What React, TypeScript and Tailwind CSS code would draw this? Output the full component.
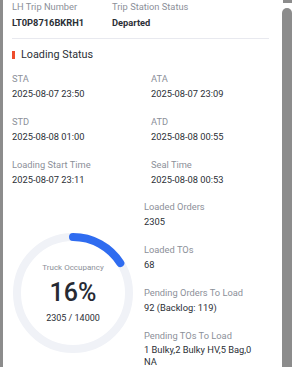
import React from 'react';

const Field: React.FC<{ label: string; value: string }> = ({ label, value }) => (
  <div>
    <div className="text-[9.3px] leading-[14px] text-[#8c9099]">{label}</div>
    <div className="mt-[1px] text-[9.3px] leading-[14px] text-[#2b2f36]">{value}</div>
  </div>
);

const OccupancyRing: React.FC<{ percent: number; loaded: number; total: number }> = ({ percent, loaded, total }) => {
  const r = 56;
  const c = 2 * Math.PI * r;
  return (
    <div className="relative w-[120px] h-[120px] shrink-0">
      <svg width="120" height="120" viewBox="0 0 120 120" className="-rotate-90">
        <circle cx="60" cy="60" r={r} fill="none" stroke="#f0f2f7" strokeWidth="8" />
        <circle
          cx="60"
          cy="60"
          r={r}
          fill="none"
          stroke="#2f6cf0"
          strokeWidth="8"
          strokeLinecap="round"
          strokeDasharray={`${(c * percent) / 100} ${c}`}
        />
      </svg>
      <div className="absolute inset-0 flex flex-col items-center pt-[30px]">
        <div className="text-[8px] leading-[10px] text-[#8c9099]">Truck Occupancy</div>
        <div className="mt-[5px] text-[25px] leading-[30px] font-medium text-[#262a33]">{percent}%</div>
        <div className="mt-[5px] text-[9px] leading-[10px] text-[#2b2f36]">
          {loaded} / {total}
        </div>
      </div>
    </div>
  );
};

const App: React.FC = () => {
  return (
    <div className="w-[295px] h-[367px] overflow-hidden flex bg-white font-['Roboto',sans-serif]">
      <div className="w-[3px] shrink-0 bg-[#8c8c8c]" />
      <div className="relative flex-1">
        <div className="pl-[9px] w-[266px]">
          {/* Header */}
          <div className="flex">
            <div className="w-[100px]">
              <div className="text-[9.3px] leading-[14px] text-[#8c9099]">LH Trip Number</div>
              <div className="mt-[2px] text-[9.3px] leading-[14px] font-bold text-[#2b2f36]">LT0P8716BKRH1</div>
            </div>
            <div>
              <div className="text-[9.3px] leading-[14px] text-[#8c9099]">Trip Station Status</div>
              <div className="mt-[2px] text-[9.3px] leading-[14px] font-bold text-[#2b2f36]">Departed</div>
            </div>
          </div>

          <div className="mt-[8px] h-px bg-[#e8e9ef]" />

          {/* Loading Status */}
          <div className="mt-[8px] flex items-center gap-[6px] h-[16px]">
            <div className="w-[3px] h-[8px] bg-[#ee4d2d]" />
            <div className="text-[10.8px] leading-[16px] text-[#2b2f36]">Loading Status</div>
          </div>

          <div className="mt-[9px] grid grid-cols-[139px_1fr] gap-y-[14px]">
            <Field label="STA" value="2025-08-07 23:50" />
            <Field label="ATA" value="2025-08-07 23:09" />
            <Field label="STD" value="2025-08-08 01:00" />
            <Field label="ATD" value="2025-08-08 00:55" />
            <Field label="Loading Start Time" value="2025-08-07 23:11" />
            <Field label="Seal Time" value="2025-08-08 00:53" />
          </div>

          <div className="mt-[13px] flex items-start">
            <div className="ml-[1px] mt-[33px]">
              <OccupancyRing percent={16} loaded={2305} total={14000} />
            </div>
            <div className="ml-[11px] w-[118px] flex flex-col gap-[14px]">
              <Field label="Loaded Orders" value="2305" />
              <Field label="Loaded TOs" value="68" />
              <Field label="Pending Orders To Load" value="92 (Backlog: 119)" />
              <div>
                <div className="text-[9.3px] leading-[14px] text-[#8c9099]">Pending TOs To Load</div>
                <div className="mt-[1px] text-[9.3px] leading-[12px] text-[#2b2f36]">1 Bulky,2 Bulky HV,5 Bag,0 NA</div>
              </div>
            </div>
          </div>
        </div>

        {/* Scrollbar */}
        <div className="absolute right-[3px] top-0 w-[9px] h-[3px] bg-[#8c8c8c]" />
        <div className="absolute right-[3px] top-[8px] bottom-0 w-[10px] rounded-t-full bg-[#8c8c8c]" />
      </div>
    </div>
  );
};

export default App;
